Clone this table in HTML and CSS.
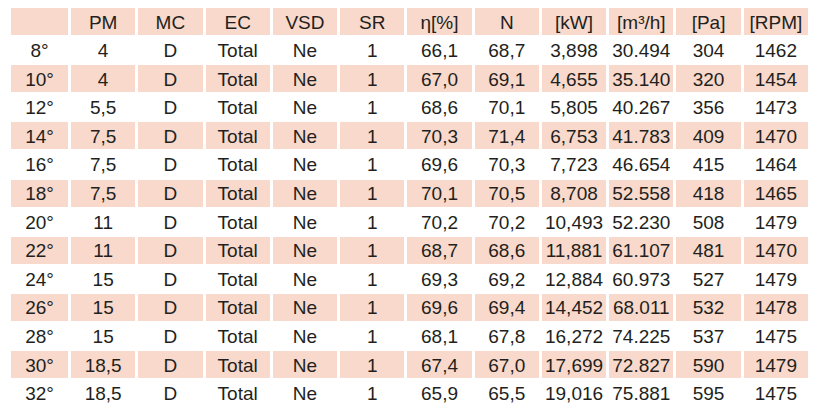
FILE: index.html
```html
<!DOCTYPE html>
<html>
<head>
<meta charset="utf-8">
<link rel="stylesheet" href="styles.css">
</head>
<body>
<div class="table">
  <div class="row shade"><div></div><div>PM</div><div>MC</div><div>EC</div><div>VSD</div><div>SR</div><div>η[%]</div><div>N</div><div>[kW]</div><div>[m³/h]</div><div>[Pa]</div><div>[RPM]</div></div>
  <div class="row"><div>8°</div><div>4</div><div>D</div><div>Total</div><div>Ne</div><div>1</div><div>66,1</div><div>68,7</div><div>3,898</div><div>30.494</div><div>304</div><div>1462</div></div>
  <div class="row shade"><div>10°</div><div>4</div><div>D</div><div>Total</div><div>Ne</div><div>1</div><div>67,0</div><div>69,1</div><div>4,655</div><div>35.140</div><div>320</div><div>1454</div></div>
  <div class="row"><div>12°</div><div>5,5</div><div>D</div><div>Total</div><div>Ne</div><div>1</div><div>68,6</div><div>70,1</div><div>5,805</div><div>40.267</div><div>356</div><div>1473</div></div>
  <div class="row shade"><div>14°</div><div>7,5</div><div>D</div><div>Total</div><div>Ne</div><div>1</div><div>70,3</div><div>71,4</div><div>6,753</div><div>41.783</div><div>409</div><div>1470</div></div>
  <div class="row"><div>16°</div><div>7,5</div><div>D</div><div>Total</div><div>Ne</div><div>1</div><div>69,6</div><div>70,3</div><div>7,723</div><div>46.654</div><div>415</div><div>1464</div></div>
  <div class="row shade"><div>18°</div><div>7,5</div><div>D</div><div>Total</div><div>Ne</div><div>1</div><div>70,1</div><div>70,5</div><div>8,708</div><div>52.558</div><div>418</div><div>1465</div></div>
  <div class="row"><div>20°</div><div>11</div><div>D</div><div>Total</div><div>Ne</div><div>1</div><div>70,2</div><div>70,2</div><div>10,493</div><div>52.230</div><div>508</div><div>1479</div></div>
  <div class="row shade"><div>22°</div><div>11</div><div>D</div><div>Total</div><div>Ne</div><div>1</div><div>68,7</div><div>68,6</div><div>11,881</div><div>61.107</div><div>481</div><div>1470</div></div>
  <div class="row"><div>24°</div><div>15</div><div>D</div><div>Total</div><div>Ne</div><div>1</div><div>69,3</div><div>69,2</div><div>12,884</div><div>60.973</div><div>527</div><div>1479</div></div>
  <div class="row shade"><div>26°</div><div>15</div><div>D</div><div>Total</div><div>Ne</div><div>1</div><div>69,6</div><div>69,4</div><div>14,452</div><div>68.011</div><div>532</div><div>1478</div></div>
  <div class="row"><div>28°</div><div>15</div><div>D</div><div>Total</div><div>Ne</div><div>1</div><div>68,1</div><div>67,8</div><div>16,272</div><div>74.225</div><div>537</div><div>1475</div></div>
  <div class="row shade"><div>30°</div><div>18,5</div><div>D</div><div>Total</div><div>Ne</div><div>1</div><div>67,4</div><div>67,0</div><div>17,699</div><div>72.827</div><div>590</div><div>1479</div></div>
  <div class="row"><div>32°</div><div>18,5</div><div>D</div><div>Total</div><div>Ne</div><div>1</div><div>65,9</div><div>65,5</div><div>19,016</div><div>75.881</div><div>595</div><div>1475</div></div>
</div>
</body>
</html>
```
FILE: styles.css
```css
html, body {
  margin: 0;
  padding: 0;
  background: #ffffff;
}
body {
  font-family: "Liberation Sans", Arial, sans-serif;
  font-size: 19px;
  color: #231f20;
}
.table {
  display: flex;
  flex-direction: column;
  gap: 1.6px;
  width: 797px;
  margin: 8px 0 0 11px;
}
.row {
  display: grid;
  grid-template-columns: 57px repeat(11, 1fr);
  column-gap: 3px;
  height: 27px;
}
.row > div {
  display: flex;
  align-items: center;
  justify-content: center;
  padding-top: 1px;
  white-space: nowrap;
  line-height: 1;
}
.row.shade > div {
  background: #f8d9cb;
}
```
